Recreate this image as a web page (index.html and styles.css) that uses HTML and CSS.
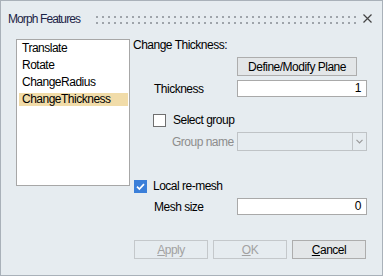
FILE: index.html
```html
<!DOCTYPE html>
<html>
<head>
<meta charset="utf-8">
<link rel="stylesheet" href="styles.css">
</head>
<body>
<div class="window">
  <div class="titlebar">
    <span class="title">Morph Features</span>
    <div class="gripper"></div>
    <svg class="close" width="9" height="9" viewBox="0 0 9 9"><path d="M0.5 0.5L8.5 8.5M8.5 0.5L0.5 8.5" stroke="#444" stroke-width="1.2" fill="none"/></svg>
  </div>
  <div class="main">
    <ul class="list">
      <li>Translate</li>
      <li>Rotate</li>
      <li>ChangeRadius</li>
      <li class="selected">ChangeThickness</li>
    </ul>
    <div class="panel">
      <div class="heading">Change Thickness:</div>
      <div class="row r-btn"><button class="btn plane">Define/Modify Plane</button></div>
      <div class="row r-thick"><span class="label ind1">Thickness</span><div class="input">1</div></div>
      <div class="row r-sel"><span class="check ind-check"></span><span class="check-label">Select group</span></div>
      <div class="row r-group"><span class="label ind2 disabled">Group name</span><div class="combo"><span class="combo-field"></span><span class="combo-btn"><svg width="7" height="5" viewBox="0 0 7 5"><path d="M0.5 0.8L3.5 3.8L6.5 0.8" stroke="#9a9a9a" stroke-width="1.2" fill="none"/></svg></span></div></div>
      <div class="row r-local"><span class="check checked"><svg width="13" height="13" viewBox="0 0 13 13"><path d="M3 6.6L5.4 9L10 4.2" stroke="#fff" stroke-width="1.7" fill="none"/></svg></span><span class="check-label">Local re-mesh</span></div>
      <div class="row r-mesh"><span class="label ind1">Mesh size</span><div class="input">0</div></div>
    </div>
  </div>
  <div class="footer">
    <button class="btn fbtn" disabled><u>A</u>pply</button>
    <button class="btn fbtn" disabled><u>O</u>K</button>
    <button class="btn fbtn"><u>C</u>ancel</button>
  </div>
</div>
</body>
</html>
```

FILE: styles.css
```css
* { box-sizing: border-box; }
html, body { margin: 0; padding: 0; }
body {
  font-family: "Liberation Sans", Arial, sans-serif;
  font-size: 12px;
  letter-spacing: -0.5px;
  color: #000;
  background: #e6ecf0;
}
.window {
  width: 383px;
  height: 276px;
  border: 1px solid #a9b1b9;
  background: #e6ecf0;
  display: flex;
  flex-direction: column;
}
.titlebar {
  height: 38px;
  display: flex;
  align-items: flex-start;
  padding: 11px 0 0 7px;
}
.title {
  line-height: 15px;
  color: #1c2447;
  letter-spacing: -0.9px;
}
.gripper {
  width: 262px;
  height: 8px;
  margin: 4px 0 0 16px;
  background-image: conic-gradient(from 270deg at 2px 2px, #9ea4aa 25%, transparent 0);
  background-size: 6px 6px;
}
.close {
  margin: 2px 0 0 5px;
}
.main {
  display: flex;
  align-items: flex-start;
}
.list {
  list-style: none;
  margin: 0 0 0 15px;
  padding: 0;
  width: 114px;
  height: 147px;
  border: 1px solid #a7a7a7;
  background: #fff;
}
.list li {
  height: 13px;
  line-height: 13px;
  margin: 4px 1px 0 2px;
  padding-left: 3px;
  white-space: nowrap;
}
.list li:first-child { margin-top: 2px; }
.list .selected { background: #f1dca9; }
.panel {
  margin-left: 3px;
  width: 234px;
  display: flex;
  flex-direction: column;
}
.heading {
  height: 13px;
  line-height: 13px;
}
.row {
  display: flex;
  align-items: center;
}
.r-btn { margin-top: 5px; padding-left: 104px; }
.r-thick { margin-top: 4px; }
.r-sel { margin-top: 17px; }
.r-group { margin-top: 5px; }
.r-local { margin-top: 29px; }
.r-mesh { margin-top: 5px; }
.label {
  width: 104px;
  flex: none;
  white-space: nowrap;
}
.ind1 { padding-left: 21px; }
.ind2 { padding-left: 39px; }
.disabled { color: #8d8d8d; }
.input {
  width: 130px;
  height: 17px;
  border: 1px solid #a9a9a9;
  background: #fff;
  text-align: right;
  line-height: 15px;
  padding-right: 5px;
}
.check {
  width: 13px;
  height: 13px;
  flex: none;
  border: 1px solid #6f6f6f;
  background: #fff;
  margin-left: 1px;
}
.ind-check { margin-left: 20px; }
.check.checked {
  border: none;
  background: #3b7fd9;
}
.check svg { display: block; }
.check-label {
  margin-left: 6px;
  line-height: 13px;
}
.r-sel .check-label { margin-left: 7px; }
.combo {
  width: 130px;
  height: 19px;
  display: flex;
  border: 1px solid #bfc3c6;
}
.combo-field { flex: 1; }
.combo-btn {
  width: 14px;
  border-left: 1px solid #bfc3c6;
  display: flex;
  align-items: center;
  justify-content: center;
}
.combo-btn svg { display: block; }
.btn {
  font-family: inherit;
  font-size: 12px;
  letter-spacing: -0.5px;
  height: 19px;
  border: 1px solid #adadad;
  background: #e3e6e8;
  color: #000;
  padding: 0;
  margin: 0;
  border-radius: 0;
  line-height: 16px;
}
.plane { width: 120px; }
.footer {
  margin-top: 25px;
  display: flex;
  justify-content: flex-end;
  gap: 5px;
  padding-right: 16px;
}
.fbtn { width: 74px; }
.fbtn:disabled {
  color: #a2a2a2;
  border-color: #c4c8cb;
  background: #e6ecf0;
}
```
